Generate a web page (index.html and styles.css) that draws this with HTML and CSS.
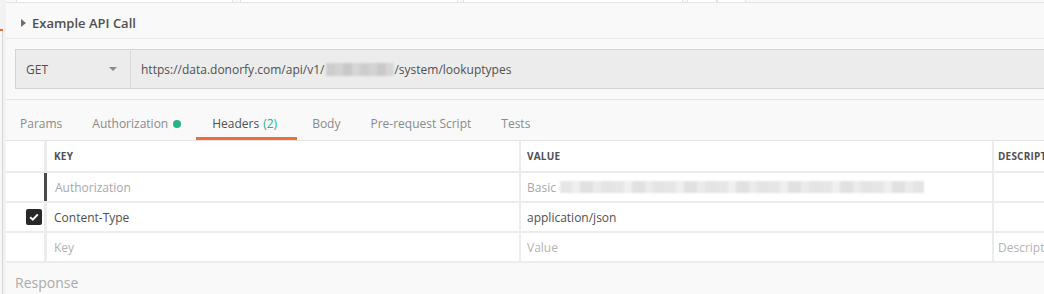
FILE: index.html
```html
<!DOCTYPE html>
<html lang="en">
<head>
    <meta charset="UTF-8">
    <meta name="viewport" content="width=device-width, initial-scale=1.0">
    <title>Example API Call</title>
    <link rel="stylesheet" href="styles.css">
</head>
<body>
    <div class="page">
        <div class="sidebar">
            <div class="rail"><div class="rail-mark"></div></div>
        </div>

        <div class="main">
            <!-- bottoms of the tabs above -->
            <div class="top-strip">
                <span class="seg" style="width: 10px"></span>
                <span class="seg tab" style="width: 217px"></span>
                <span class="seg" style="width: 7px"></span>
                <span class="seg tab" style="width: 218px"></span>
                <span class="seg" style="width: 5px"></span>
                <span class="seg tab" style="width: 220px"></span>
                <span class="seg" style="width: 4px"></span>
                <span class="seg tab" style="width: 30px"></span>
                <span class="seg tab" style="width: 29px"></span>
            </div>

            <div class="section-head">
                <span class="disclosure"></span>
                <span class="section-title">Example API Call</span>
            </div>

            <div class="request-wrap">
                <div class="request-bar">
                    <div class="method">
                        <span>GET</span>
                        <span class="caret"></span>
                    </div>
                    <div class="url">
                        <span>https://data.donorfy.com/api/v1/</span>
                        <span class="blurred url-blur"></span>
                        <span>/system/lookuptypes</span>
                    </div>
                </div>
            </div>

            <div class="tabs">
                <div class="tab-item">Params</div>
                <div class="tab-item">Authorization <span class="dot"></span></div>
                <div class="tab-item active">Headers <span class="count">(2)</span></div>
                <div class="tab-item">Body</div>
                <div class="tab-item">Pre-request Script</div>
                <div class="tab-item">Tests</div>
            </div>

            <div class="table">
                <div class="row head">
                    <div class="cell handle"></div>
                    <div class="cell key">KEY</div>
                    <div class="cell value">VALUE</div>
                    <div class="cell desc">DESCRIPTION</div>
                </div>
                <div class="row">
                    <div class="cell handle"></div>
                    <div class="cell key dragging muted">Authorization</div>
                    <div class="cell value muted">Basic <span class="blurred basic-blur"></span></div>
                    <div class="cell desc"></div>
                </div>
                <div class="row">
                    <div class="cell handle"><span class="checkbox">
                        <svg width="12" height="12" viewBox="0 0 12 12"><path d="M2.2 6.2 L4.8 8.7 L9.8 3.4" fill="none" stroke="#fff" stroke-width="2"/></svg>
                    </span></div>
                    <div class="cell key">Content-Type</div>
                    <div class="cell value">application/json</div>
                    <div class="cell desc"></div>
                </div>
                <div class="row">
                    <div class="cell handle"></div>
                    <div class="cell key placeholder">Key</div>
                    <div class="cell value placeholder">Value</div>
                    <div class="cell desc placeholder">Description</div>
                </div>
            </div>

            <div class="response">Response</div>
        </div>
    </div>
</body>
</html>
```

FILE: styles.css
```css
body {
    margin: 0;
    font-family: "Open Sans", "Liberation Sans", sans-serif;
    background-color: #f9f9f9;
    color: #505050;
    overflow: hidden;
}

.page {
    display: flex;
    height: 294px;
    overflow: hidden;
}

/* left rail */
.sidebar {
    width: 6px;
    flex-shrink: 0;
    background-color: #f2f2f2;
}

.rail {
    width: 2px;
    height: 100%;
    background-color: #f7f7f7;
    border-right: 1px solid #d6d6d6;
}

.rail-mark {
    margin-top: 29px;
    width: 3px;
    height: 2px;
    background-color: #f26b3a;
}

.main {
    flex: 1;
    min-width: 0;
    display: flex;
    flex-direction: column;
}

/* top strip */
.top-strip {
    display: flex;
    height: 2px;
    border-bottom: 1px solid #e3e3e3;
    flex-shrink: 0;
}

.seg {
    display: block;
    height: 2px;
    flex-shrink: 0;
}

.seg.tab {
    background-color: #ffffff;
    border-left: 1px solid #e3e3e3;
    border-right: 1px solid #e3e3e3;
    box-sizing: border-box;
}

/* section header */
.section-head {
    height: 36px;
    padding-top: 5px;
    box-sizing: border-box;
    display: flex;
    align-items: center;
    border-bottom: 1px solid #e8e8e8;
    flex-shrink: 0;
}

.disclosure {
    width: 0;
    height: 0;
    margin-left: 15px;
    margin-right: 6px;
    border-top: 4px solid transparent;
    border-bottom: 4px solid transparent;
    border-left: 5px solid #6e6e6e;
}

.section-title {
    font-size: 13px;
    font-weight: 600;
    color: #505050;
}

/* request bar */
.request-wrap {
    padding: 10px 0 10px 9px;
    border-bottom: 1px solid #e6e6e6;
    flex-shrink: 0;
}

.request-bar {
    display: flex;
    height: 38px;
    background-color: #ececec;
    border: 1px solid #d4d4d4;
    border-right: none;
}

.method {
    width: 115px;
    padding: 0 10px;
    box-sizing: border-box;
    display: flex;
    align-items: center;
    justify-content: space-between;
    border-right: 1px solid #d9d9d9;
    font-size: 12px;
    color: #505050;
}

.caret {
    width: 0;
    height: 0;
    margin-right: 3px;
    border-left: 4px solid transparent;
    border-right: 4px solid transparent;
    border-top: 4px solid #8a8a8a;
}

.url {
    display: flex;
    align-items: center;
    padding-left: 10px;
    font-size: 12px;
    color: #505050;
    white-space: nowrap;
}

.blurred {
    display: inline-block;
    filter: blur(0.8px);
}

.url-blur {
    width: 68px;
    height: 13px;
    margin-left: 2px;
    background: repeating-linear-gradient(90deg, #cdcdcd 0 9px, #d3d3d3 9px 17px, #c9c9c9 17px 26px, #d6d6d6 26px 34px);
}

/* tabs */
.tabs {
    display: flex;
    height: 40px;
    align-items: stretch;
    flex-shrink: 0;
}

.tab-item {
    display: flex;
    align-items: center;
    padding: 10px 15px 0;
    font-size: 12px;
    color: #8a8a8a;
    border-bottom: 3px solid transparent;
    box-sizing: border-box;
}

.tab-item:first-child {
    padding-left: 14px;
}

.tab-item.active {
    color: #505050;
    border-bottom-color: #f26b3a;
    padding: 10px 20px 0 16px;
}

.count {
    color: #26b47f;
    margin-left: 4px;
}

.dot {
    display: inline-block;
    width: 8px;
    height: 8px;
    border-radius: 50%;
    background-color: #26b47f;
    margin-left: 5px;
}

/* headers table */
.table {
    background-color: #ffffff;
    border-top: 1px solid #e3e3e3;
    flex-shrink: 0;
}

.row {
    display: flex;
    height: 30px;
    border-bottom: 2px solid #ececec;
    box-sizing: border-box;
}

.row.head {
    height: 32px;
}

.cell {
    display: flex;
    align-items: center;
    font-size: 12px;
    color: #505050;
    box-sizing: border-box;
    white-space: nowrap;
    overflow: hidden;
}

.row.head .cell {
    font-size: 10px;
    font-weight: 700;
    letter-spacing: 0.2px;
}

.handle {
    width: 38px;
    justify-content: flex-end;
    padding-right: 2px;
}

.key {
    width: 475px;
    border-left: 3px solid #ececec;
    padding-left: 7px;
}

.key.dragging {
    border-left-color: #4a4a4a;
    padding-left: 8px;
}

.value {
    width: 473px;
    border-left: 2px solid #ececec;
    padding-left: 6px;
}

.desc {
    flex: 1;
    border-left: 2px solid #ececec;
    padding-left: 4px;
}

.muted {
    color: #a8a8a8;
}

.placeholder {
    color: #b3b3b3;
}

.basic-blur {
    width: 364px;
    height: 12px;
    margin-left: 4px;
    background: repeating-linear-gradient(90deg, #e6e6e6 0 12px, #efefef 12px 20px, #e1e1e1 20px 33px, #ebebeb 33px 41px, #e4e4e4 41px 52px);
}

.checkbox {
    width: 16px;
    height: 16px;
    border-radius: 2px;
    background-color: #282828;
    display: flex;
    align-items: center;
    justify-content: center;
}

/* response */
.response {
    flex: 1;
    min-height: 0;
    overflow: hidden;
    padding: 10px 0 0 9px;
    font-size: 14px;
    color: #ababab;
}
```
